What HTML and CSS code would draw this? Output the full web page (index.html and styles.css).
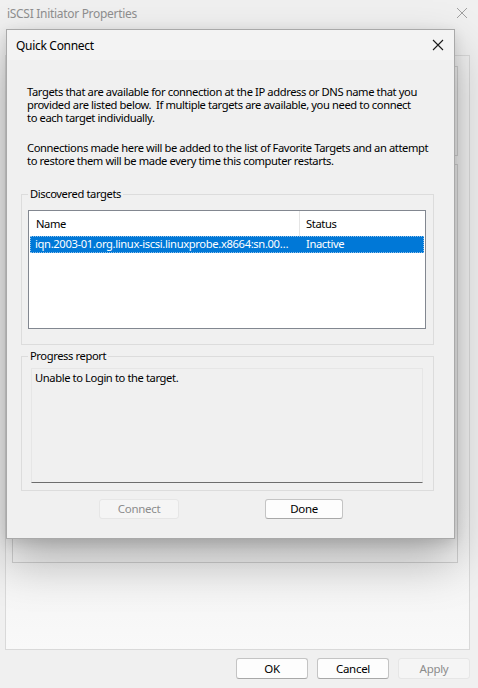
FILE: index.html
```html
<!DOCTYPE html>
<html>
<head>
<meta charset="utf-8">
<link rel="stylesheet" href="styles.css">
</head>
<body>
<div class="window">
  <div class="win-title">
    <span class="win-title-text">iSCSI Initiator Properties</span>
    <svg class="win-close" width="12" height="12" viewBox="0 0 12 12"><path d="M1 1L11 11M11 1L1 11" stroke="#a0a0a0" stroke-width="1"/></svg>
  </div>
  <div class="tabpage">
    <div class="grp grp-top"></div>
    <div class="grp grp-main"></div>
  </div>
  <div class="win-buttons">
    <button class="btn">OK</button>
    <button class="btn">Cancel</button>
    <button class="btn disabled">Apply</button>
  </div>
</div>

<div class="dialog">
  <div class="dlg-title">
    <span class="dlg-title-text">Quick Connect</span>
    <svg class="dlg-close" width="12" height="12" viewBox="0 0 12 12"><path d="M1 1L11 11M11 1L1 11" stroke="#1a1a1a" stroke-width="1.1"/></svg>
  </div>
  <div class="dlg-body">
    <p class="para"><span class="line">Targets that are available for connection at the IP address or DNS name that you</span><span class="line">provided are listed below.&nbsp; If multiple targets are available, you need to connect</span><span class="line">to each target individually.</span></p>
    <p class="para para2"><span class="line">Connections made here will be added to the list of Favorite Targets and an attempt</span><span class="line">to restore them will be made every time this computer restarts.</span></p>

    <fieldset class="group group-targets">
      <legend>Discovered targets</legend>
      <div class="listview">
        <div class="lv-header">
          <div class="lv-col lv-name">Name</div>
          <div class="lv-col lv-status">Status</div>
        </div>
        <div class="lv-row selected">
          <div class="lv-cell lv-name">iqn.2003-01.org.linux-iscsi.linuxprobe.x8664:sn.0025c4d1d4e8</div>
          <div class="lv-cell lv-status">Inactive</div>
        </div>
      </div>
    </fieldset>

    <fieldset class="group group-progress">
      <legend>Progress report</legend>
      <div class="report">Unable to Login to the target.</div>
    </fieldset>

    <div class="dlg-buttons">
      <button class="btn disabled btn-connect">Connect</button>
      <button class="btn btn-done">Done</button>
    </div>
  </div>
</div>
</body>
</html>
```

FILE: styles.css
```css
html, body {
  margin: 0;
  padding: 0;
}
body {
  width: 478px;
  height: 688px;
  background: #f0f0f0;
  font-family: "Noto Sans", "Open Sans", sans-serif;
  font-size: 11.2px;
  letter-spacing: -0.4px;
  color: #000;
  position: relative;
  overflow: hidden;
}
.window {
  width: 478px;
  height: 688px;
  display: flex;
  flex-direction: column;
  background: #f0f0f0;
}
.win-title {
  height: 29px;
  display: flex;
  align-items: center;
  justify-content: space-between;
  padding: 0 10px 0 7px;
  box-sizing: border-box;
}
.win-title-text {
  color: #8f8f8f;
  font-size: 12px;
  letter-spacing: -0.3px;
  margin-top: -2px;
}
.win-close {
  margin-top: -3px;
}
.tabpage {
  margin: 26px 8px 0 5px;
  height: 595px;
  border: 1px solid #d9d9d9;
  background: linear-gradient(#f0f0f0 0, #f0f0f0 75%, #f4f4f4 85%, #f9f9f9 100%);
  box-sizing: border-box;
  padding: 10px 11px 0 6px;
  display: flex;
  flex-direction: column;
  gap: 8px;
}
.grp {
  border: 1px solid #d0d0d0;
}
.grp-top {
  height: 88px;
}
.grp-main {
  height: 397px;
}
.win-buttons {
  display: flex;
  justify-content: flex-end;
  gap: 9px;
  padding: 8px 8px 0 0;
}
.btn {
  font-family: "Noto Sans", "Open Sans", sans-serif;
  font-size: 11.5px;
  letter-spacing: -0.3px;
  width: 72px;
  height: 21px;
  padding: 0;
  border: 1px solid #c4c4c4;
  border-bottom-color: #a8a8a8;
  border-radius: 3px;
  background: #fdfdfd;
  color: #000;
  line-height: 18px;
}
.btn.disabled {
  background: #f5f5f5;
  border-color: #e6e6e6;
  color: #8c8c8c;
}

.dialog {
  position: absolute;
  left: 6px;
  top: 29px;
  width: 449px;
  height: 510px;
  box-sizing: border-box;
  border: 1px solid #a9a9a9;
  background: #f0f0f0;
  box-shadow: 0 22px 45px rgba(0,0,0,0.28), 0 4px 12px rgba(0,0,0,0.12);
  display: flex;
  flex-direction: column;
}
.dlg-title {
  height: 30px;
  background: #f3f3f3;
  display: flex;
  align-items: center;
  justify-content: space-between;
  padding: 0 10px 0 9px;
  flex: none;
}
.dlg-title-text {
  font-size: 12px;
  letter-spacing: -0.3px;
  color: #000;
}
.dlg-body {
  flex: 1;
  padding: 0 20px 0 14px;
  display: flex;
  flex-direction: column;
}
.para {
  margin: 25px 0 0 6px;
  line-height: 13px;
  white-space: nowrap;
  color: #000;
  display: flex;
  flex-direction: column;
}
.line {
  display: block;
}
.para2 {
  margin-top: 17px;
}
.group {
  margin: 0;
  border: 1px solid #dcdcdc;
  padding: 0;
  min-width: 0;
  box-sizing: border-box;
}
.group legend {
  padding: 0 2px;
  margin-left: 6px;
  line-height: 14px;
}
.group-targets {
  margin-top: 20px;
  height: 158px;
}
.listview {
  margin: 9px 7px 0 6px;
  height: 119px;
  border: 1px solid #828790;
  background: #fff;
  box-sizing: border-box;
  padding: 0 1px;
}
.lv-header {
  height: 25px;
  display: flex;
}
.lv-col {
  height: 25px;
  line-height: 26px;
  box-sizing: border-box;
  padding-left: 6px;
}
.lv-header .lv-name {
  width: 270px;
  border-right: 1px solid #e5e5e5;
}
.lv-row {
  display: flex;
  height: 17px;
  line-height: 16px;
}
.lv-row.selected {
  background: #0078d7;
  color: #fff;
  outline: 1px dotted #8fbfe8;
  outline-offset: -1px;
}
.lv-cell {
  box-sizing: border-box;
}
.lv-row .lv-name {
  width: 270px;
  white-space: nowrap;
  overflow: hidden;
  text-overflow: ellipsis;
  padding-left: 5px;
  padding-right: 6px;
  letter-spacing: -0.35px;
}
.lv-row .lv-status {
  padding-left: 6px;
}
.group-progress {
  margin-top: 4px;
  height: 142px;
}
.report {
  margin: 5px 10px 0 9px;
  height: 115px;
  box-sizing: border-box;
  border: 1px solid #e6e6e6;
  border-bottom: 1px solid #6d6d6d;
  background: #f0f0f0;
  padding: 2px 3px;
  line-height: 14px;
}
.dlg-buttons {
  display: flex;
  padding-left: 78px;
  gap: 86px;
  margin-top: 8px;
}
.btn-connect {
  width: 80px;
  height: 20px;
}
.btn-done {
  width: 78px;
  height: 20px;
}
```
